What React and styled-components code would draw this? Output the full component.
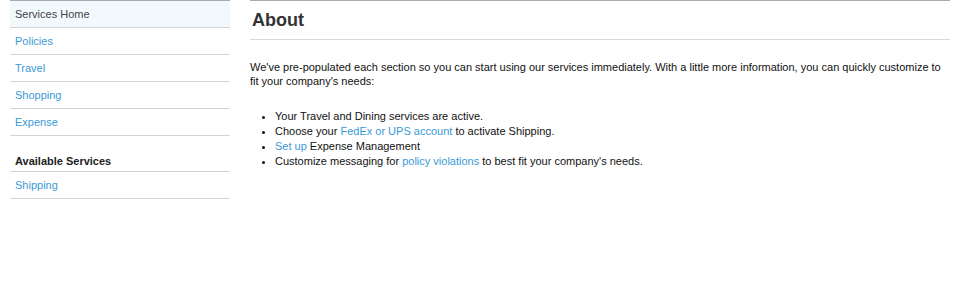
import React from 'react';
import styled, { createGlobalStyle } from 'styled-components';

const GlobalStyle = createGlobalStyle`
  html, body {
    margin: 0;
    padding: 0;
    background: #fff;
    font-family: "Liberation Sans", Arial, Helvetica, sans-serif;
    font-size: 11px;
    color: #111;
  }
`;

const Page = styled.div`
  display: flex;
  align-items: flex-start;
  gap: 20px;
  padding: 0 10px;
`;

const Sidebar = styled.nav`
  width: 220px;
  flex-shrink: 0;
  border-top: 1px solid #a9a9a9;
`;

const NavItem = styled.a`
  display: block;
  height: 26px;
  line-height: 26px;
  padding: 0 5px;
  border-bottom: 1px solid #d4d4d4;
  color: ${(p) => (p.active ? '#444' : '#3a9ad6')};
  background: ${(p) => (p.active ? '#f2f9fd' : 'transparent')};
  text-decoration: none;
  cursor: pointer;
`;

const NavHeading = styled.div`
  margin-top: 17px;
  height: 16px;
  line-height: 16px;
  padding: 0 5px 2px;
  font-weight: bold;
  color: #222;
  border-bottom: 1px solid #d4d4d4;
`;

const Main = styled.main`
  flex: 1;
  max-width: 700px;
  border-top: 1px solid #a9a9a9;
`;

const Title = styled.h1`
  margin: 0;
  height: 38px;
  line-height: 38px;
  padding: 0 3px 0 2px;
  font-size: 18px;
  font-weight: bold;
  color: #333;
  border-bottom: 1px solid #d9d9d9;
`;

const Intro = styled.p`
  margin: 20px 0 0;
  line-height: 14px;
`;

const List = styled.ul`
  margin: 21px 0 0;
  padding-left: 25px;
  line-height: 15px;
`;

const Link = styled.a`
  color: #3a9ad6;
  text-decoration: none;
  cursor: pointer;
`;

const navItems = ['Policies', 'Travel', 'Shopping', 'Expense'];

export default function App() {
  return (
    <>
      <GlobalStyle />
      <Page>
        <Sidebar>
          <NavItem active>Services Home</NavItem>
          {navItems.map((item) => (
            <NavItem key={item}>{item}</NavItem>
          ))}
          <NavHeading>Available Services</NavHeading>
          <NavItem>Shipping</NavItem>
        </Sidebar>
        <Main>
          <Title>About</Title>
          <Intro>
            We've pre-populated each section so you can start using our services immediately. With a
            little more information, you can quickly customize to fit your company's needs:
          </Intro>
          <List>
            <li>Your Travel and Dining services are active.</li>
            <li>
              Choose your <Link>FedEx or UPS account</Link> to activate Shipping.
            </li>
            <li>
              <Link>Set up</Link> Expense Management
            </li>
            <li>
              Customize messaging for <Link>policy violations</Link> to best fit your company's needs.
            </li>
          </List>
        </Main>
      </Page>
    </>
  );
}
